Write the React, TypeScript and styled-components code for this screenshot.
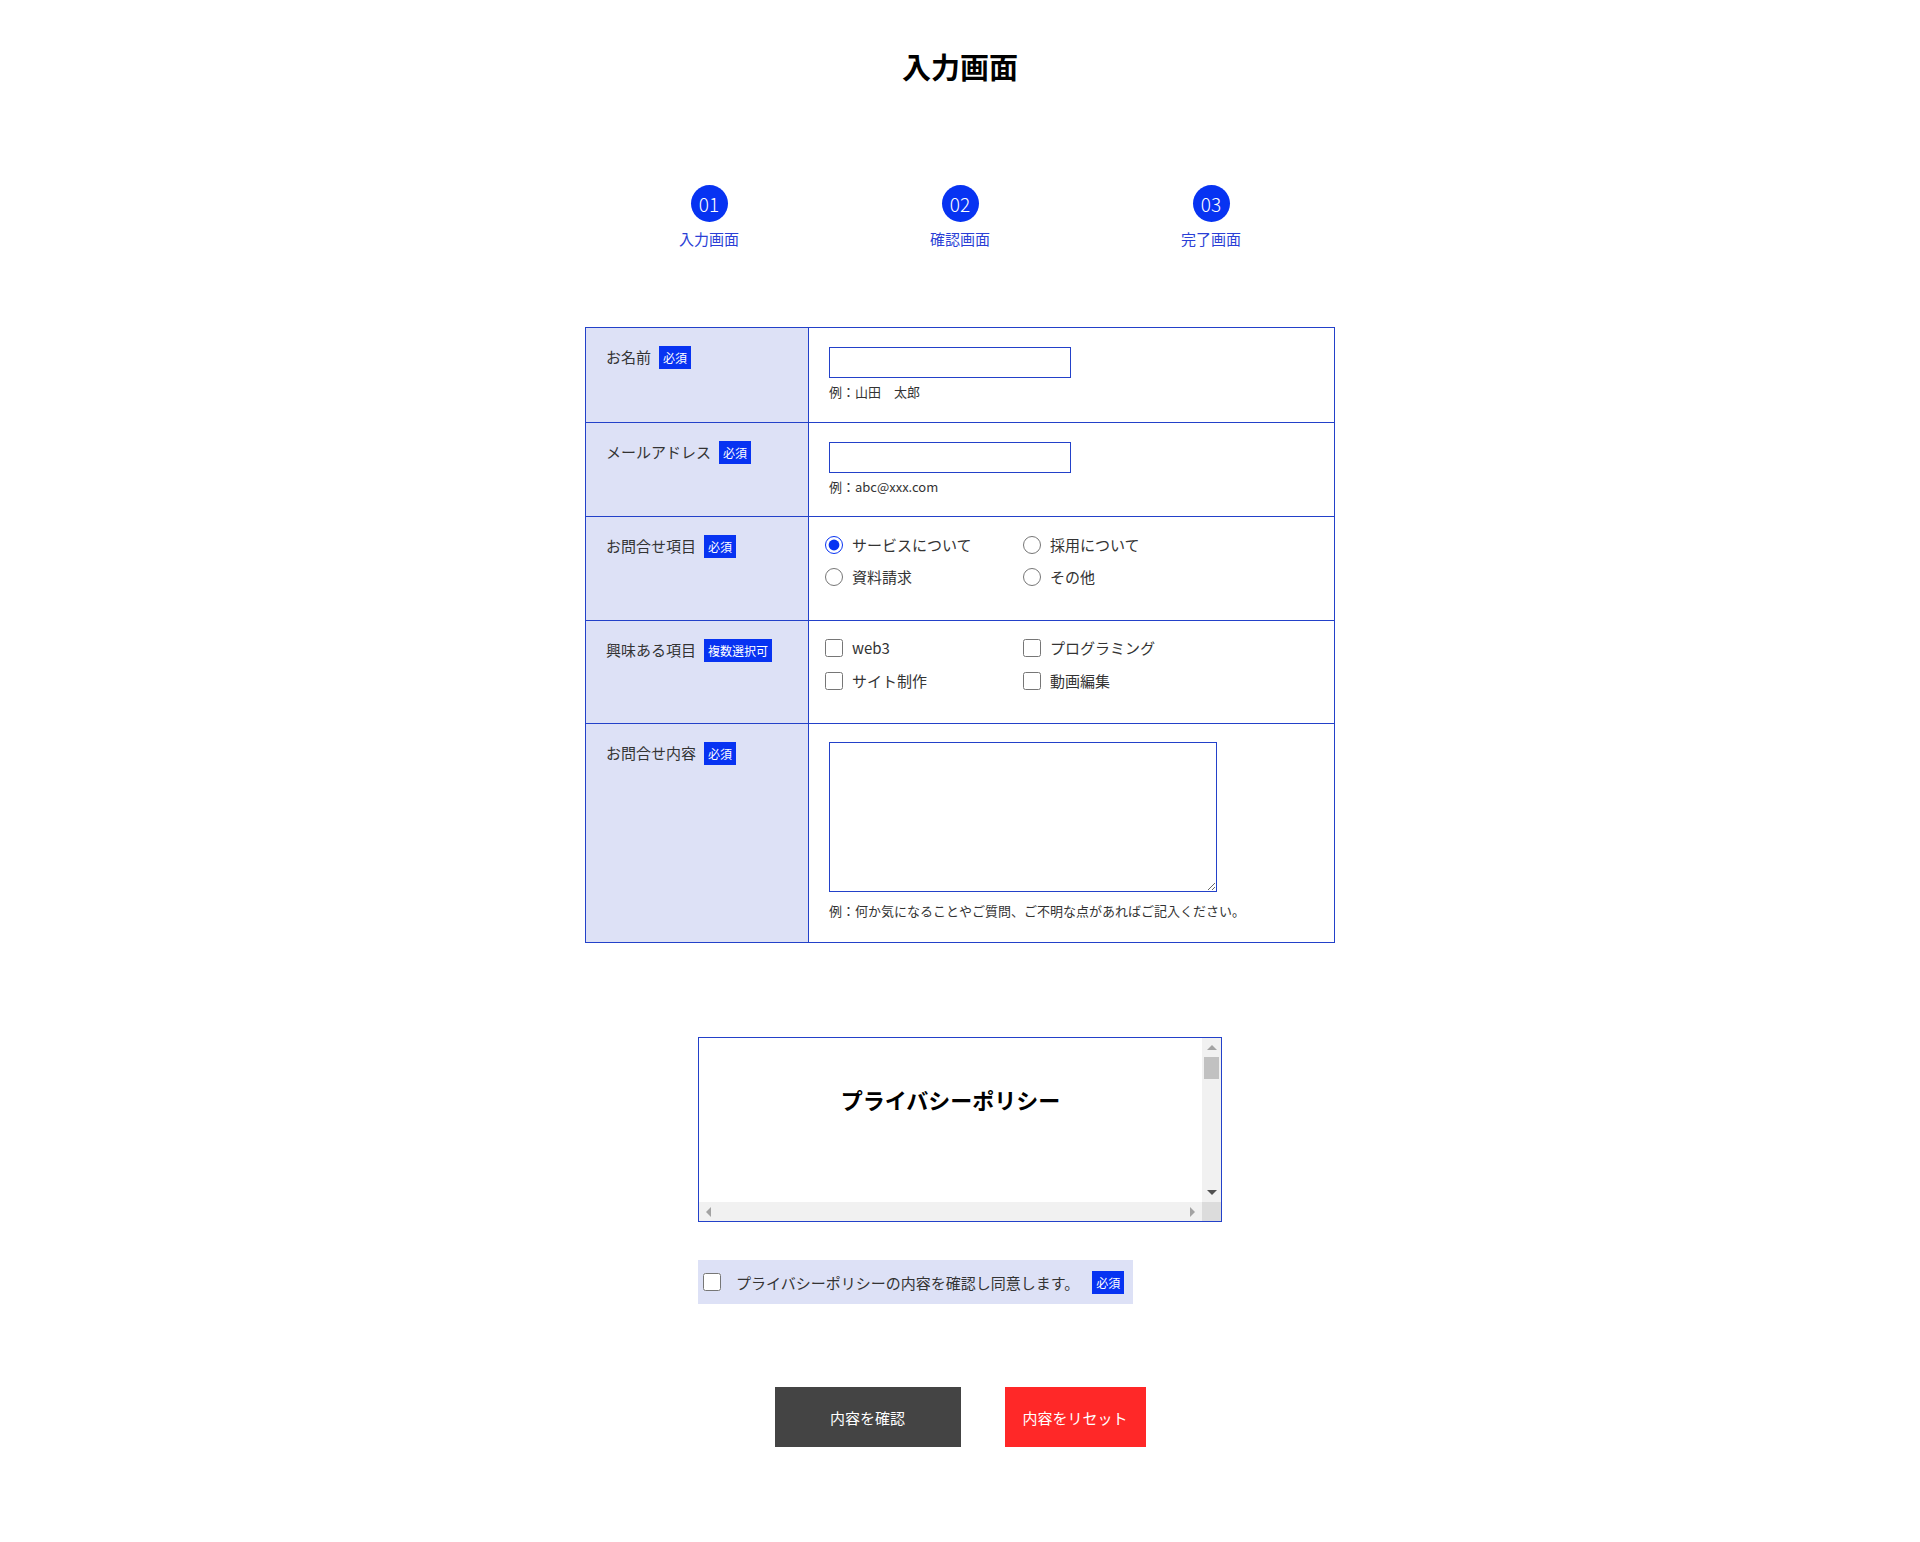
import React, { ReactElement, ReactNode } from 'react';
import styled, { createGlobalStyle, css } from 'styled-components';

const color = {
  primary: '#0733f2',
  border: '#2341c9',
  labelBg: '#dde1f6',
  text: '#333333',
  dark: '#444444',
  red: '#ff2828',
  track: '#f1f1f1',
  thumb: '#c1c1c1',
  arrow: '#a3a3a3',
};

const BAR = 19;

const GlobalStyle = createGlobalStyle`
  * {
    box-sizing: border-box;
  }
  body {
    margin: 0;
    background: #fff;
    color: ${color.text};
    font-family: "Noto Sans CJK JP", "Noto Sans", sans-serif;
  }
`;

const Page = styled.main`
  display: flex;
  flex-direction: column;
  align-items: center;
  padding: 46px 0 95px;
`;

const Title = styled.h1`
  margin: 0;
  font-size: 29px;
  line-height: 40px;
  font-weight: 700;
  color: #000;
`;

const Steps = styled.ol`
  display: flex;
  margin: 99px 0 0;
  padding: 0;
  list-style: none;
`;

const Step = styled.li`
  display: flex;
  flex-direction: column;
  align-items: center;
  width: 251px;
`;

const StepNumber = styled.span`
  display: flex;
  align-items: center;
  justify-content: center;
  width: 37px;
  height: 37px;
  border-radius: 50%;
  background: ${color.primary};
  color: #fff;
  font-size: 19px;
  font-weight: 300;
`;

const StepLabel = styled.span`
  margin-top: 7px;
  font-size: 15px;
  line-height: 20px;
  color: #2b3fd6;
`;

const FormTable = styled.div`
  width: 750px;
  margin-top: 78px;
  border: 1px solid ${color.border};
`;

const Row = styled.div`
  display: grid;
  grid-template-columns: 223px 1fr;
  border-top: 1px solid ${color.border};

  &:first-child {
    border-top: none;
  }
`;

const LabelCell = styled.div`
  display: flex;
  align-items: flex-start;
  padding: 17px 20px;
  background: ${color.labelBg};
  border-right: 1px solid ${color.border};
`;

const LabelText = styled.span`
  display: flex;
  align-items: center;
  gap: 8px;
  font-size: 15px;
  line-height: 24px;
`;

const Badge = styled.span`
  display: inline-block;
  padding: 0 4px;
  background: ${color.primary};
  color: #fff;
  font-size: 12px;
  line-height: 23px;
`;

const ValueCell = styled.div<{ $pad: string }>`
  padding: ${(p) => p.$pad};
`;

const TextInput = styled.input`
  display: block;
  width: 242px;
  height: 31px;
  margin: 0;
  border: 1px solid ${color.border};
  font-size: 14px;
  padding: 0 6px;
  outline: none;
`;

const TextArea = styled.textarea`
  display: block;
  width: 388px;
  height: 150px;
  margin: 0;
  border: 1px solid ${color.border};
  font-size: 14px;
  outline: none;
`;

const Hint = styled.p<{ $gap: number }>`
  margin: ${(p) => p.$gap}px 0 0;
  font-size: 13px;
  line-height: 18px;
  color: ${color.text};
`;

const Options = styled.div<{ $rowGap: number }>`
  display: grid;
  grid-template-columns: 198px 198px;
  row-gap: ${(p) => p.$rowGap}px;
  margin-left: -4px;
`;

const Option = styled.label`
  display: flex;
  align-items: center;
  gap: 9px;
  font-size: 15px;
  line-height: 24px;
  cursor: pointer;
`;

const Choice = styled.input`
  width: 18px;
  height: 18px;
  margin: 0;
  accent-color: ${color.primary};
`;

/* privacy policy box with classic scrollbars */

const PolicyFrame = styled.div`
  display: grid;
  grid-template-columns: 1fr ${BAR}px;
  grid-template-rows: 1fr ${BAR}px;
  width: 524px;
  height: 185px;
  margin-top: 94px;
  border: 1px solid ${color.border};
`;

const PolicyContent = styled.div`
  overflow: hidden;
  padding-top: 46px;
`;

const PolicyTitle = styled.h2`
  margin: 0;
  text-align: center;
  font-size: 22px;
  line-height: 31px;
  font-weight: 700;
  color: #000;
`;

const Rail = styled.div<{ $vertical?: boolean }>`
  display: flex;
  flex-direction: ${(p) => (p.$vertical ? 'column' : 'row')};
  background: ${color.track};
`;

type Dir = 'up' | 'down' | 'left' | 'right';

const triangle: Record<Dir, ReturnType<typeof css>> = {
  up: css`
    border-width: 0 5px 5px;
    border-color: transparent transparent ${color.arrow};
  `,
  down: css`
    border-width: 5px 5px 0;
    border-color: #505050 transparent transparent;
  `,
  left: css`
    border-width: 5px 5px 5px 0;
    border-color: transparent ${color.arrow} transparent transparent;
  `,
  right: css`
    border-width: 5px 0 5px 5px;
    border-color: transparent transparent transparent ${color.arrow};
  `,
};

const ArrowButton = styled.span<{ $dir: Dir }>`
  display: flex;
  flex: none;
  align-items: center;
  justify-content: center;
  width: ${BAR}px;
  height: ${BAR}px;

  &::before {
    content: '';
    width: 0;
    height: 0;
    border-style: solid;
    ${(p) => triangle[p.$dir]}
  }
`;

const Track = styled.span`
  flex: 1;
`;

const Thumb = styled.span`
  flex: none;
  height: 22px;
  margin: 0 2px;
  background: ${color.thumb};
`;

const Corner = styled.div`
  background: #dcdcdc;
`;

const AgreeWrap = styled.div`
  width: 524px;
  margin-top: 38px;
`;

const Agree = styled.label`
  display: inline-flex;
  align-items: center;
  height: 44px;
  padding: 0 9px 0 5px;
  background: ${color.labelBg};
  font-size: 15px;
  cursor: pointer;
`;

const AgreeText = styled.span`
  margin: 0 13px 0 15px;
`;

const Buttons = styled.div`
  display: flex;
  gap: 44px;
  margin-top: 83px;
`;

const Button = styled.button<{ $bg: string; $width: number }>`
  width: ${(p) => p.$width}px;
  height: 60px;
  border: none;
  background: ${(p) => p.$bg};
  color: #fff;
  font-family: inherit;
  font-size: 15px;
  cursor: pointer;
`;

type FieldProps = {
  label: string;
  badge: string;
  pad: string;
  children: ReactNode;
};

function Field({ label, badge, pad, children }: FieldProps): ReactElement {
  return (
    <Row>
      <LabelCell>
        <LabelText>
          {label}
          <Badge>{badge}</Badge>
        </LabelText>
      </LabelCell>
      <ValueCell $pad={pad}>{children}</ValueCell>
    </Row>
  );
}

const steps = [
  { no: '01', label: '入力画面' },
  { no: '02', label: '確認画面' },
  { no: '03', label: '完了画面' },
];

const inquiryTypes = ['サービスについて', '採用について', '資料請求', 'その他'];
const interests = ['web3', 'プログラミング', 'サイト制作', '動画編集'];

export default function App(): ReactElement {
  return (
    <>
      <GlobalStyle />
      <Page>
        <Title>入力画面</Title>

        <Steps>
          {steps.map((s) => (
            <Step key={s.no}>
              <StepNumber>{s.no}</StepNumber>
              <StepLabel>{s.label}</StepLabel>
            </Step>
          ))}
        </Steps>

        <FormTable>
          <Field label="お名前" badge="必須" pad="19px 20px 21px">
            <TextInput type="text" />
            <Hint $gap={5}>例：山田　太郎</Hint>
          </Field>
          <Field label="メールアドレス" badge="必須" pad="19px 20px 20px">
            <TextInput type="email" />
            <Hint $gap={5}>例：abc@xxx.com</Hint>
          </Field>
          <Field label="お問合せ項目" badge="必須" pad="16px 20px 31px">
            <Options $rowGap={8}>
              {inquiryTypes.map((t, i) => (
                <Option key={t}>
                  <Choice type="radio" name="inquiry" defaultChecked={i === 0} />
                  {t}
                </Option>
              ))}
            </Options>
          </Field>
          <Field label="興味ある項目" badge="複数選択可" pad="15px 20px 30px">
            <Options $rowGap={9}>
              {interests.map((t) => (
                <Option key={t}>
                  <Choice type="checkbox" />
                  {t}
                </Option>
              ))}
            </Options>
          </Field>
          <Field label="お問合せ内容" badge="必須" pad="18px 20px 22px">
            <TextArea />
            <Hint $gap={10}>例：何か気になることやご質問、ご不明な点があればご記入ください。</Hint>
          </Field>
        </FormTable>

        <PolicyFrame>
          <PolicyContent>
            <PolicyTitle>プライバシーポリシー</PolicyTitle>
          </PolicyContent>
          <Rail $vertical>
            <ArrowButton $dir="up" />
            <Thumb />
            <Track />
            <ArrowButton $dir="down" />
          </Rail>
          <Rail>
            <ArrowButton $dir="left" />
            <Track />
            <ArrowButton $dir="right" />
          </Rail>
          <Corner />
        </PolicyFrame>

        <AgreeWrap>
          <Agree>
            <Choice type="checkbox" />
            <AgreeText>プライバシーポリシーの内容を確認し同意します。</AgreeText>
            <Badge>必須</Badge>
          </Agree>
        </AgreeWrap>

        <Buttons>
          <Button type="button" $bg={color.dark} $width={186}>
            内容を確認
          </Button>
          <Button type="reset" $bg={color.red} $width={141}>
            内容をリセット
          </Button>
        </Buttons>
      </Page>
    </>
  );
}
